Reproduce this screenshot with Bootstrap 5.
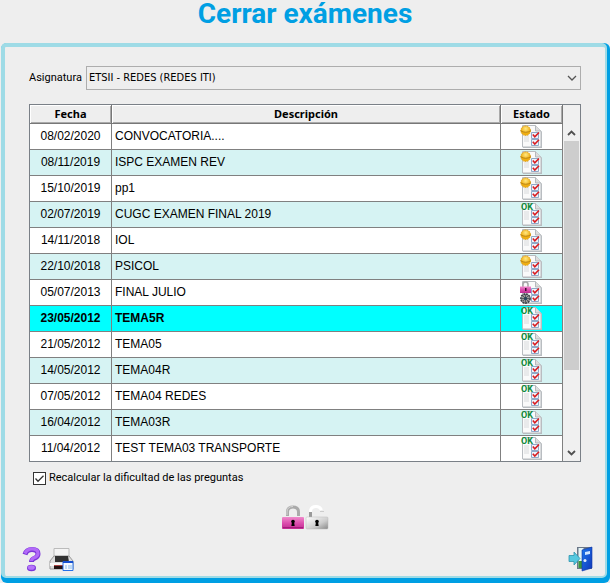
<!DOCTYPE html>
<html lang="es">
<head>
<meta charset="utf-8">
<meta name="viewport" content="width=device-width, initial-scale=1">
<title>Cerrar exámenes</title>
<link href="https://cdn.jsdelivr.net/npm/bootstrap@5.3.0/dist/css/bootstrap.min.css" rel="stylesheet">
<style>
body{background:#eee;color:#000;font:11px/16px "DejaVu Sans Condensed","Noto Sans",sans-serif}
label{font-family:Roboto,sans-serif}
.page-title{font:700 28px/28px Roboto,sans-serif;color:#009fe3;height:43px}
.shell{background:#009fe3;border-radius:6px;padding:0 3px 5px 0;margin-left:1px}
.panel{border:4px solid #9edbe6;border-right-width:2px;border-bottom-width:2px;border-radius:5px;background:#eee;padding:19px 24px 4px 24px}
.subject{appearance:none;height:24px;border:1px solid #adadad;background:#eee;color:#000;padding:0 24px 0 2px;width:100%;border-radius:0}
.picker svg{right:4px;top:8px;pointer-events:none}
.listing{border:1px solid #7a8087;margin-top:14px}
.exams{border-collapse:separate;border-spacing:0;table-layout:fixed;width:100%;font:12px/25px "Liberation Sans",Arial,sans-serif}
.exams th{height:19px;font:700 11px/16px "Noto Sans",sans-serif;text-align:center;background:#eee;border:solid #777;border-width:0 1px 1px 0;padding:0;box-shadow:inset 1px 1px #fff,inset -1px -1px #aaa}
.exams td{height:26px;padding:0 3px;border:solid #808080;border-width:0 1px 1px 0;background:#fff;white-space:nowrap;overflow:hidden}
.exams tr:nth-child(even) td{background:#d6f3f3}
.exams tr.chosen td{background:#0ff;font-weight:700}
.exams tr:last-child td{border-bottom:0;height:25px}
.exams td svg{display:block;margin:0 auto}
.c-date{width:82px}.c-state{width:62px}
.scroller{width:17px;padding:19px 1px 0 1px;background:#f0f0f0}
.thumb{background:#cdcdcd;height:229px}
.arrow{height:17px}
.tick{appearance:none;width:13px;height:13px;border:1px solid #333;background:#fff;margin:0}
.tick:checked{background:#fff url("data:image/svg+xml,%3Csvg xmlns='http://www.w3.org/2000/svg' viewBox='0 0 11 11'%3E%3Cpath d='M1.5 5.5l2.5 2.7L9.5 2.7' fill='none' stroke='%23333' stroke-width='1.3'/%3E%3C/svg%3E")}
.recalc{margin:8px 0 0 4px;gap:3px}
.locks{margin-top:17px}
.tool{border:0;background:none;padding:0;line-height:0}
.bottom-tools{margin:14px -13px 0 -8px}
</style>
<script src="https://cdn.jsdelivr.net/npm/bootstrap@5.3.0/dist/js/bootstrap.bundle.min.js"></script>
</head>
<body>
<svg width="0" height="0" class="position-absolute" aria-hidden="true">
<defs>
<linearGradient id="pink" x2="0" y2="1"><stop stop-color="#f08acb"/><stop offset=".5" stop-color="#dc4fae"/><stop offset="1" stop-color="#c22a92"/></linearGradient>
<linearGradient id="silver" x2="1" y2="1"><stop stop-color="#fff"/><stop offset=".6" stop-color="#ccc"/><stop offset="1" stop-color="#888"/></linearGradient>
<linearGradient id="blue" x2="1" y2="1"><stop stop-color="#1d78ef"/><stop offset="1" stop-color="#1237b8"/></linearGradient>
<radialGradient id="gold" cy=".3"><stop stop-color="#ffe884"/><stop offset="1" stop-color="#f0ae10"/></radialGradient>
<symbol id="sheet" viewBox="0 0 24 24">
<path d="M3 1h13l6 6v16H3z" fill="#b8bcc0"/><path d="M2.500.500h13l5.500 5.500v16H2.500z" fill="#fafafa" stroke="#b9bdc1"/>
<path d="M4 8h5v9H4z" fill="#e9eaeb"/><path d="M15.500.500v5.500H21" fill="#ddd" stroke="#b5b9bc"/>
<path d="M11.500 7.500h7v6h-7zM11.500 14.500h7v6h-7z" fill="#eef4fb" stroke="#8fa9c8"/>
<path d="M12.800 9.500l2 2.300 4.200-4.300M12.800 16.700l2 2.300 4.200-4.300" fill="none" stroke="#d91d22" stroke-width="1.600"/>
</symbol>
<symbol id="new" viewBox="0 0 24 24"><use href="#sheet"/><circle cx="5.700" cy="5.700" r="4.800" fill="url(#gold)" stroke="#e0a21c" stroke-width="1" stroke-dasharray="1.500 .8"/><path d="M.5 5.700q5 3.200 10.500 0" fill="none" stroke="#b98212"/></symbol>
<symbol id="ok" viewBox="0 0 24 24"><use href="#sheet"/><text x="1" y="7" font-family="Roboto,sans-serif" font-weight="700" font-size="9" fill="#0b8a3a">OK</text></symbol>
<symbol id="closed" viewBox="0 0 24 24"><use href="#sheet"/><path d="M3 6V3.500Q3 1 5.500 1T8 3.500V6" fill="none" stroke="#aaa" stroke-width="1.600"/><path d="M0 5.500h11v6.500H0z" fill="url(#pink)"/><path d="M5 7h1.500v3H5z" fill="#401030"/><circle cx="5.500" cy="17.500" r="4.600" fill="#999" stroke="#3d4247" stroke-width="1.600" stroke-dasharray="2 .7"/><path d="M5.500 13.500v8M1.500 17.500h8M3 15l5 5M8 15l-5 5" stroke="#454b50" stroke-width=".8"/><circle cx="5.500" cy="17.500" r="1.500" fill="#26465c"/></symbol>
</defs>
</svg>
<div class="d-flex flex-column min-vh-100">
<h1 class="page-title text-center m-0">Cerrar exámenes</h1>
<div class="shell flex-grow-1 d-flex flex-column">
<main class="panel flex-grow-1 d-flex flex-column">
<div class="d-flex align-items-center gap-1">
<label for="subject">Asignatura</label>
<div class="picker position-relative flex-grow-1">
<select id="subject" class="subject d-block"><option>ETSII - REDES (REDES ITI)</option></select>
<svg class="position-absolute" width="10" height="8" aria-hidden="true"><path d="M1 2l4 4 4-4" fill="none" stroke="#555" stroke-width="1.300"/></svg>
</div>
</div>
<div class="listing d-flex">
<table class="exams flex-grow-1">
<colgroup><col class="c-date"><col><col class="c-state"></colgroup>
<thead><tr><th scope="col">Fecha</th><th scope="col">Descripción</th><th scope="col">Estado</th></tr></thead>
<tbody>
<tr><td class="text-center">08/02/2020</td><td>CONVOCATORIA....</td><td><svg width="24" height="24"><use href="#new"/></svg></td></tr>
<tr><td class="text-center">08/11/2019</td><td>ISPC EXAMEN REV</td><td><svg width="24" height="24"><use href="#new"/></svg></td></tr>
<tr><td class="text-center">15/10/2019</td><td>pp1</td><td><svg width="24" height="24"><use href="#new"/></svg></td></tr>
<tr><td class="text-center">02/07/2019</td><td>CUGC EXAMEN FINAL 2019</td><td><svg width="24" height="24"><use href="#ok"/></svg></td></tr>
<tr><td class="text-center">14/11/2018</td><td>IOL</td><td><svg width="24" height="24"><use href="#new"/></svg></td></tr>
<tr><td class="text-center">22/10/2018</td><td>PSICOL</td><td><svg width="24" height="24"><use href="#new"/></svg></td></tr>
<tr><td class="text-center">05/07/2013</td><td>FINAL JULIO</td><td><svg width="24" height="24"><use href="#closed"/></svg></td></tr>
<tr class="chosen"><td class="text-center">23/05/2012</td><td>TEMA5R</td><td><svg width="24" height="24"><use href="#ok"/></svg></td></tr>
<tr><td class="text-center">21/05/2012</td><td>TEMA05</td><td><svg width="24" height="24"><use href="#ok"/></svg></td></tr>
<tr><td class="text-center">14/05/2012</td><td>TEMA04R</td><td><svg width="24" height="24"><use href="#ok"/></svg></td></tr>
<tr><td class="text-center">07/05/2012</td><td>TEMA04 REDES</td><td><svg width="24" height="24"><use href="#ok"/></svg></td></tr>
<tr><td class="text-center">16/04/2012</td><td>TEMA03R</td><td><svg width="24" height="24"><use href="#ok"/></svg></td></tr>
<tr><td class="text-center">11/04/2012</td><td>TEST TEMA03 TRANSPORTE</td><td><svg width="24" height="24"><use href="#ok"/></svg></td></tr>
</tbody>
</table>
<div class="scroller flex-shrink-0 d-flex flex-column">
<button class="tool arrow" type="button" aria-label="Subir"><svg width="9" height="8"><path d="M1 6l3.500-3.500L8 6" fill="none" stroke="#505050" stroke-width="1.800"/></svg></button>
<div class="thumb"></div>
<button class="tool arrow mt-auto" type="button" aria-label="Bajar"><svg width="9" height="8"><path d="M1 2l3.500 3.500L8 2" fill="none" stroke="#505050" stroke-width="1.800"/></svg></button>
</div>
</div>
<div class="recalc d-flex align-items-center"><input class="tick" type="checkbox" id="recalc" checked><label for="recalc">Recalcular la dificultad de las preguntas</label></div>
<div class="locks d-flex justify-content-center">
<button class="tool" type="button" aria-label="Cerrar examen"><svg width="24" height="28"><path d="M6.500 13V9Q6.500 4 12 4t5.500 5v4" fill="none" stroke="#aaa" stroke-width="3"/><path d="M6 12V9q0-5.500 6-5.500" fill="none" stroke="#d5d5d5"/><rect x="1" y="14" width="22" height="12" rx="1" fill="url(#pink)"/><path d="M2 24.500h20" stroke="#a51c7b"/><circle cx="12" cy="18.500" r="1.800"/><path d="M11 19h2l.7 4h-3.400z"/></svg></button>
<button class="tool" type="button" aria-label="Abrir examen"><svg width="24" height="28"><path d="M5.500 13V8Q6 3.500 11 3.500q4 0 5.500 3.500" fill="none" stroke="#fff" stroke-width="3"/><path d="M5.500 9v5" stroke="#999" stroke-width="3"/><path d="M15 8.500h4" stroke="#ccc"/><rect x="1" y="14" width="22" height="12" rx="1" fill="url(#silver)" stroke="#bbb" stroke-width=".5"/><circle cx="12" cy="18.500" r="1.800"/><path d="M11 19h2l.7 4h-3.400z"/></svg></button>
</div>
<div class="bottom-tools d-flex align-items-center justify-content-between mt-auto">
<div class="d-flex gap-1">
<button class="tool" type="button" aria-label="Ayuda"><svg width="24" height="26"><path d="M4 8.500Q5.500 3.500 11 3.500q6 0 6 4.500 0 3-4 4.500-2.500 1-2.500 3.500" fill="none" stroke="#7b35d8" stroke-width="5"/><path d="M4 7.500Q6 2.800 11 2.800q6 0 6 4.700 0 3-4.500 4.500-2 1-2 3" fill="none" stroke="#b26af8" stroke-width="3.200"/><ellipse cx="10.500" cy="22" rx="4.500" ry="3.200" fill="#7b35d8"/><ellipse cx="10.300" cy="21.500" rx="3.500" ry="2.300" fill="#b674fa"/></svg></button>
<button class="tool" type="button" aria-label="Imprimir"><svg width="26" height="26"><path d="M5 2.500h15v8H5z" fill="#f5f5f5" stroke="#bbb"/><path d="M1 15l4-5h15l4 5v8H1z" fill="#ddd" stroke="#999"/><path d="M6 10h13l1 6H6z" fill="#333"/><path d="M1 17h22v3H1z" fill="#fafafa"/><path d="M5 20h14v3H5z" fill="#241313"/><path d="M5 19.500h10" stroke="#a44"/><path d="M14 15.500h10v9H14z" fill="#f5faff" stroke="#2570e8"/><path d="M14 16h10" stroke="#1550d0" stroke-width="2"/><path d="M16 19h2v4h-2zM19 19h4v4h-4z" fill="#bfdaf5"/></svg></button>
</div>
<button class="tool" type="button" aria-label="Salir"><svg width="26" height="26"><path d="M9 1h15v22H9z" fill="#6b7788"/><path d="M10.500 2h5v20h-5z" fill="#e2f4f6"/><path d="M10.500 15h5v7h-5z" fill="#3b963f"/><path d="M14 4l10-3v21l-10 3z" fill="url(#blue)" stroke="#1238a5" stroke-width=".6"/><path d="M17 6l5-1v3l-5 1z" fill="#cfe6ff"/><circle cx="17" cy="14.500" r="1.500" fill="#e5eefa"/><path d="M1 9.500h5V6l6 6.500L6 19v-3.500H1z" fill="#55c8df" stroke="#2d94ae" stroke-width=".8"/></svg></button>
</div>
</main>
</div>
</div>
</body>
</html>
